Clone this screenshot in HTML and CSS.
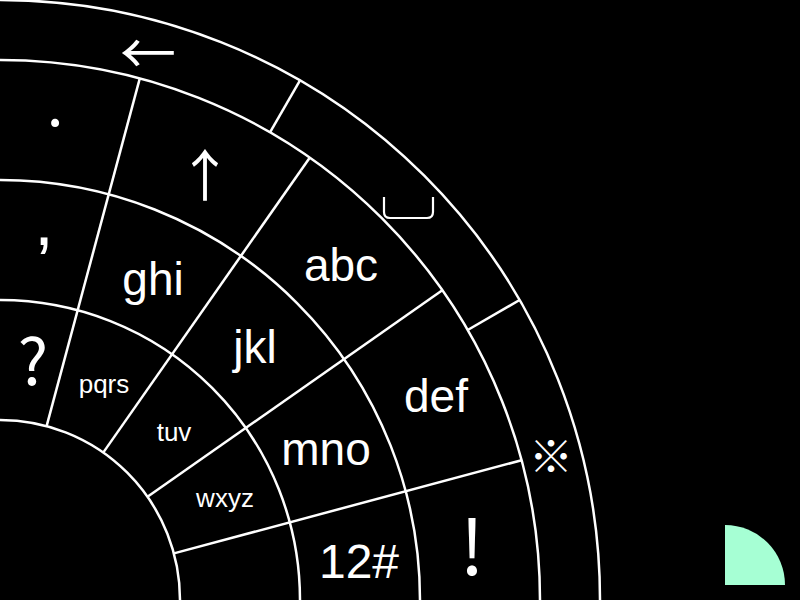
FILE: index.html
```html
<!DOCTYPE html>
<html lang="ja">
<head>
    <meta charset="UTF-8">
    <meta name="viewport" content="width=device-width, initial-scale=1.0">
    <title>Flick keyboard</title>
    <link rel="stylesheet" href="styles.css">
</head>
<body>
    <svg class="board" viewBox="0 0 800 600" width="800" height="600">
        <!-- rings, centre at bottom left -->
        <g class="grid">
            <circle cx="0" cy="600" r="180" />
            <circle cx="0" cy="600" r="300" />
            <circle cx="0" cy="600" r="420" />
            <circle cx="0" cy="600" r="540" />
            <circle cx="0" cy="600" r="600" />
            <line x1="46.6" y1="426.1" x2="139.8" y2="78.4" />
            <line x1="103.2" y1="452.6" x2="309.7" y2="157.7" />
            <line x1="147.5" y1="496.8" x2="442.3" y2="290.3" />
            <line x1="173.9" y1="553.4" x2="521.6" y2="460.2" />
            <line x1="270" y1="132.4" x2="300" y2="80.4" />
            <line x1="467.7" y1="330" x2="519.6" y2="300" />
        </g>

        <!-- outer ring -->
        <text class="sym arrow" x="148" y="49">←</text>
        <path class="space" d="M384 197 V212 Q384 218 390 218 H427 Q433 218 433 212 V197" />
        <text class="sym mark" x="551" y="454">※</text>

        <!-- third ring -->
        <text class="sym dot" x="55" y="99">.</text>
        <text class="sym arrow" x="205" y="171">↑</text>
        <text class="key" x="341" y="281">abc</text>
        <text class="key" x="436" y="412">def</text>
        <text class="sym bang" x="472" y="542">!</text>

        <!-- second ring -->
        <text class="key comma" x="44" y="245">,</text>
        <text class="key" x="153" y="295">ghi</text>
        <text class="key" x="255" y="363">jkl</text>
        <text class="key" x="326" y="465">mno</text>
        <text class="key wide" x="359" y="578">12#</text>

        <!-- inner ring -->
        <text class="sym ask" x="33" y="357">?</text>
        <text class="key small" x="104" y="393">pqrs</text>
        <text class="key small" x="174" y="441">tuv</text>
        <text class="key small" x="225" y="507">wxyz</text>

        <path class="corner" d="M725 585 L725 525 A60 60 0 0 1 785 585 Z" />
    </svg>
</body>
</html>
```
FILE: styles.css
```css
body {
    margin: 0;
    background: #000;
}

.board {
    display: block;
}

.grid circle,
.grid line {
    fill: none;
    stroke: #fff;
    stroke-width: 2.5;
}

.key {
    fill: #fff;
    font-family: "Liberation Sans", Arial, sans-serif;
    font-size: 46px;
    text-anchor: middle;
}

.key.wide {
    font-size: 48px;
}

.key.small {
    font-size: 26px;
}

.key.comma {
    font-size: 70px;
}

.sym {
    fill: #fff;
    font-family: "Noto Sans CJK JP", sans-serif;
    text-anchor: middle;
    dominant-baseline: central;
}

.space {
    fill: none;
    stroke: #fff;
    stroke-width: 2.2;
}

.arrow {
    font-size: 56px;
}

.mark {
    font-size: 44px;
}

.dot {
    font-size: 60px;
}

.ask {
    font-size: 64px;
}

.bang {
    font-size: 76px;
}

.corner {
    fill: #a6ffd4;
}
```
